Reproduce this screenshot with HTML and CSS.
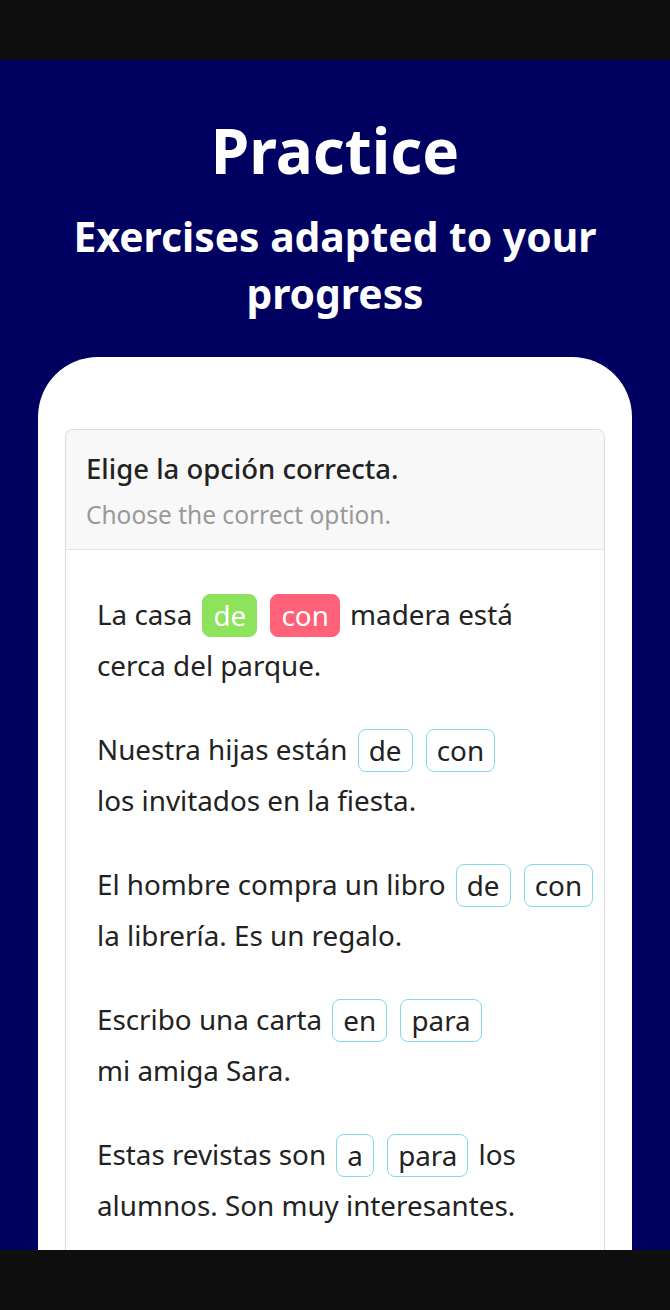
FILE: index.html
```html
<!DOCTYPE html>
<html lang="en">
<head>
<meta charset="utf-8">
<title>Practice</title>
<link rel="stylesheet" href="styles.css">
</head>
<body>
<div class="status-bar"></div>
<main class="screen">
  <header class="hero">
    <h1 class="hero-title">Practice</h1>
    <p class="hero-sub">Exercises adapted to your progress</p>
  </header>
  <section class="phone">
    <div class="exercise">
      <div class="ex-head">
        <div class="ex-title">Elige la opción correcta.</div>
        <div class="ex-trans">Choose the correct option.</div>
      </div>
      <div class="ex-body">
        <p class="sentence">La casa <span class="chip chip-right">de</span> <span class="chip chip-wrong">con</span> madera está<br>cerca del parque.</p>
        <p class="sentence">Nuestra hijas están <span class="chip">de</span> <span class="chip">con</span><br>los invitados en la fiesta.</p>
        <p class="sentence">El hombre compra un libro <span class="chip">de</span> <span class="chip">con</span><br>la librería. Es un regalo.</p>
        <p class="sentence">Escribo una carta <span class="chip">en</span> <span class="chip">para</span><br>mi amiga Sara.</p>
        <p class="sentence">Estas revistas son <span class="chip">a</span> <span class="chip">para</span> los<br>alumnos. Son muy interesantes.</p>
      </div>
    </div>
  </section>
</main>
<div class="nav-bar"></div>
</body>
</html>
```

FILE: styles.css
```css
* { box-sizing: border-box; }

html, body {
  margin: 0;
  padding: 0;
  background: #0f0f0f;
}

body {
  width: 670px;
  height: 1310px;
  font-family: "Noto Sans", "Open Sans", "Liberation Sans", sans-serif;
  display: flex;
  flex-direction: column;
  overflow: hidden;
}

.status-bar {
  height: 60px;
  flex: none;
  background: #0f0f0f;
}

.nav-bar {
  height: 60px;
  flex: none;
  background: #0f0f0f;
}

.screen {
  height: 1190px;
  flex: none;
  background: #000060;
  overflow: hidden;
  display: flex;
  flex-direction: column;
  align-items: stretch;
}

.hero {
  text-align: center;
  color: #ffffff;
  padding: 52px 20px 0;
}

.hero-title {
  margin: 0;
  font-size: 62px;
  line-height: 76px;
  font-weight: 700;
}

.hero-sub {
  margin: 20px 0 0;
  font-size: 40.8px;
  line-height: 57px;
  font-weight: 700;
}

.phone {
  margin: 35px 38px 0;
  background: #ffffff;
  border-radius: 60px 60px 0 0;
  padding: 72px 27px 0;
  flex: 1;
}

.exercise {
  border: 1px solid #dcdcdc;
  border-bottom: none;
  border-radius: 8px 8px 0 0;
  height: 100%;
  overflow: hidden;
}

.ex-head {
  background: #f8f8f8;
  border-bottom: 1px solid #e6e6e6;
  padding: 21px 20px 19px;
}

.ex-title {
  font-size: 27.5px;
  line-height: 36px;
  font-weight: 500;
  color: #222222;
}

.ex-trans {
  margin-top: 13px;
  font-size: 24.5px;
  line-height: 30px;
  font-weight: 400;
  color: #9a9a9a;
}

.ex-body {
  padding: 39px 4px 0 31px;
}

.sentence {
  margin: 0 0 33px;
  font-size: 27.8px;
  line-height: 51px;
  color: #222222;
  white-space: nowrap;
}

.chip {
  display: inline-block;
  vertical-align: middle;
  line-height: 41px;
  padding: 0 10px;
  margin: -4px 3px 0;
  border: 1px solid #86d8ec;
  border-radius: 8px;
  color: #222222;
}

.chip-right {
  background: #8ee35c;
  border-color: #8ee35c;
  color: #ffffff;
}

.chip-wrong {
  background: #ff6179;
  border-color: #ff6179;
  color: #ffffff;
}
```
